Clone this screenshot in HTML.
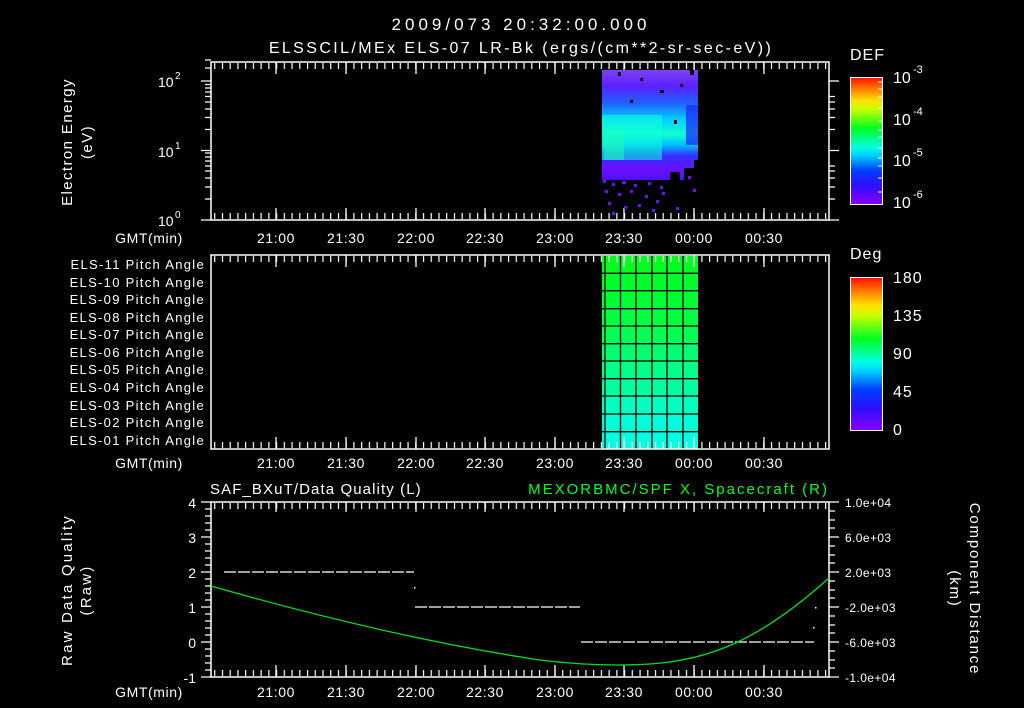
<!DOCTYPE html>
<html><head><meta charset="utf-8"><style>
html,body{margin:0;padding:0;background:#000;width:1024px;height:708px;overflow:hidden}
svg{display:block}
text{font-family:"Liberation Sans",sans-serif;fill:#fff}
.t{letter-spacing:0.6px}
</style></head><body>
<svg width="1024" height="708" viewBox="0 0 1024 708" xmlns="http://www.w3.org/2000/svg">
<defs>
<pattern id="tkT" x="276" y="0" width="7.733" height="708" patternUnits="userSpaceOnUse"><rect x="0" y="0" width="1.2" height="708" fill="#fff"/></pattern>
<linearGradient id="def" x1="0" y1="1" x2="0" y2="0">
<stop offset="0" stop-color="#8a00ff"/><stop offset="0.15" stop-color="#2a10ff"/><stop offset="0.27" stop-color="#0040ff"/><stop offset="0.38" stop-color="#00c8ff"/><stop offset="0.45" stop-color="#00ffe0"/><stop offset="0.6" stop-color="#00ff20"/><stop offset="0.75" stop-color="#c8ff00"/><stop offset="0.82" stop-color="#ffe000"/><stop offset="0.92" stop-color="#ff7000"/><stop offset="1" stop-color="#ff1000"/></linearGradient>
<linearGradient id="hm" x1="0" y1="0" x2="0" y2="1">
<stop offset="0" stop-color="#8040ff"/><stop offset="0.15" stop-color="#5a20ff"/><stop offset="0.3" stop-color="#2060ff"/><stop offset="0.45" stop-color="#00d0ff"/><stop offset="0.58" stop-color="#10ffd0"/><stop offset="0.68" stop-color="#00c0ff"/><stop offset="0.78" stop-color="#3030ff"/><stop offset="0.9" stop-color="#6a10ff"/><stop offset="1" stop-color="#5010ff"/></linearGradient>
</defs>

<text x="521" y="30" font-size="17" text-anchor="middle" letter-spacing="4">2009/073 20:32:00.000</text>
<text x="521" y="53" font-size="16" text-anchor="middle" letter-spacing="2.4">ELSSCIL/MEx ELS-07 LR-Bk  (ergs/(cm**2-sr-sec-eV))</text>

<!-- TOP PANEL -->
<rect x="211" y="62" width="618" height="158" fill="none" stroke="#fff" stroke-width="1.5"/>
<rect x="211" y="63" width="618" height="6" fill="url(#tkT)"/>
<rect x="211" y="213" width="618" height="6" fill="url(#tkT)"/>
<g stroke="#fff" stroke-width="1.3">
<path d="M276 62v12M346 62v12M416 62v12M485 62v12M555 62v12M624 62v12M694 62v12M764 62v12M276 220v-12M346 220v-12M416 220v-12M485 220v-12M555 220v-12M624 220v-12M694 220v-12M764 220v-12"/>
<path d="M201 220h10M201 150.5h10M201 81h10M205 199h6M205 187h6M205 178h6M205 171h6M205 166h6M205 161h6M205 157h6M205 153h6M205 129.5h6M205 117.5h6M205 109h6M205 102h6M205 96.5h6M205 92h6M205 88h6M205 84.5h6M205 60h6M205 68h6"/>
<path d="M839 220h-10M839 150.5h-10M839 81h-10M835 199h-6M835 187h-6M835 178h-6M835 171h-6M835 166h-6M835 129.5h-6M835 117.5h-6M835 109h-6M835 102h-6M835 96.5h-6"/>
</g>
<text x="158" y="87" font-size="14">10</text><text x="175" y="79" font-size="10">2</text>
<text x="158" y="157" font-size="14">10</text><text x="175" y="149" font-size="10">1</text>
<text x="158" y="226" font-size="14">10</text><text x="175" y="218" font-size="10">0</text>
<text transform="translate(72,142) rotate(-90)" font-size="15" text-anchor="middle" letter-spacing="1.4">Electron Energy</text>
<text transform="translate(92,142) rotate(-90)" font-size="15" text-anchor="middle" letter-spacing="1.4">(eV)</text>
<g font-size="14" text-anchor="middle" class="t">
<text x="149" y="243">GMT(min)</text>
<text x="276" y="243">21:00</text><text x="346" y="243">21:30</text><text x="416" y="243">22:00</text><text x="485" y="243">22:30</text><text x="555" y="243">23:00</text><text x="624" y="243">23:30</text><text x="694" y="243">00:00</text><text x="764" y="243">00:30</text>
</g>
<rect x="602" y="70" width="96" height="110" fill="url(#hm)"/>
<rect x="602" y="115" width="60" height="45" fill="#10ffd8" opacity="0.55"/>
<rect x="604" y="130" width="20" height="30" fill="#20ffb0" opacity="0.5"/>
<rect x="686" y="105" width="12" height="40" fill="#2020ff" opacity="0.7"/>
<g fill="#000">
<rect x="640" y="78" width="3" height="3"/><rect x="660" y="90" width="4" height="3"/><rect x="618" y="72" width="3" height="4"/><rect x="680" y="84" width="3" height="3"/><rect x="690" y="70" width="4" height="5"/><rect x="630" y="100" width="3" height="3"/><rect x="674" y="120" width="3" height="4"/><rect x="694" y="160" width="4" height="20"/><rect x="684" y="168" width="10" height="12"/><rect x="670" y="172" width="10" height="8"/>
</g>
<g fill="#6a10ff">
<rect x="603" y="180" width="3" height="3"/><rect x="612" y="183" width="3" height="3"/><rect x="622" y="181" width="4" height="3"/><rect x="634" y="184" width="3" height="3"/><rect x="648" y="182" width="3" height="3"/><rect x="660" y="186" width="3" height="3"/><rect x="605" y="190" width="3" height="3"/><rect x="618" y="193" width="3" height="3"/><rect x="630" y="190" width="3" height="3"/><rect x="645" y="195" width="3" height="3"/><rect x="662" y="192" width="3" height="3"/><rect x="693" y="189" width="3" height="3"/><rect x="608" y="202" width="3" height="3"/><rect x="624" y="206" width="3" height="3"/><rect x="638" y="204" width="3" height="3"/><rect x="652" y="209" width="3" height="3"/><rect x="612" y="212" width="3" height="3"/><rect x="676" y="207" width="3" height="3"/><rect x="656" y="200" width="3" height="3"/><rect x="688" y="176" width="3" height="3"/>
</g>
<text x="850" y="60" font-size="16" letter-spacing="1">DEF</text>
<rect x="850.5" y="77.5" width="32" height="127" fill="url(#def)" stroke="#fff" stroke-width="1"/>
<g stroke="#fff" stroke-width="1"><path d="M882 82h-4M882 89h-4M882 97h-4M882 108h-4M882 121h-4M882 130h-4M882 137h-4M882 148h-4M882 158h-4M882 166h-4M882 178h-4M882 192h-4"/></g>
<text x="893" y="83" font-size="16">10</text><text x="913" y="73" font-size="11">-3</text>
<text x="893" y="125" font-size="16">10</text><text x="913" y="115" font-size="11">-4</text>
<text x="893" y="166" font-size="16">10</text><text x="913" y="156" font-size="11">-5</text>
<text x="893" y="208" font-size="16">10</text><text x="913" y="198" font-size="11">-6</text>

<!-- MIDDLE PANEL -->
<g>
<rect x="602" y="256" width="96" height="18" fill="#00ff20"/>
<rect x="602" y="273" width="96" height="18" fill="#00ff28"/>
<rect x="602" y="290" width="96" height="19" fill="#00ff30"/>
<rect x="602" y="308" width="96" height="19" fill="#00ff40"/>
<rect x="602" y="326" width="96" height="18" fill="#00ff55"/>
<rect x="602" y="343" width="96" height="18" fill="#00ff70"/>
<rect x="602" y="361" width="96" height="18" fill="#00ff88"/>
<rect x="602" y="378" width="96" height="18" fill="#00ffa0"/>
<rect x="602" y="396" width="96" height="18" fill="#00ffc0"/>
<rect x="602" y="414" width="96" height="18" fill="#00ffd8"/>
<rect x="602" y="431" width="96" height="18" fill="#00ffe0"/>
</g>
<g stroke="#000" stroke-width="1.3"><path d="M605 255v194M620.5 255v194M636 255v194M652 255v194M667 255v194M683 255v194M602 273.3h96M602 290.7h96M602 308.7h96M602 326h96M602 343.7h96M602 361h96M602 378.7h96M602 396h96M602 414h96M602 431.7h96"/></g>
<rect x="211" y="255" width="618" height="194" fill="none" stroke="#fff" stroke-width="1.5"/>
<rect x="211" y="256" width="618" height="6" fill="url(#tkT)"/>
<rect x="211" y="442" width="618" height="6" fill="url(#tkT)"/>
<g stroke="#fff" stroke-width="1.3"><path d="M276 255v12M346 255v12M416 255v12M485 255v12M555 255v12M624 255v12M694 255v12M764 255v12M276 449v-12M346 449v-12M416 449v-12M485 449v-12M555 449v-12M624 449v-12M694 449v-12M764 449v-12"/></g>
<g font-size="13" text-anchor="end" letter-spacing="1.3">
<text x="205" y="269">ELS-11 Pitch Angle</text><text x="205" y="287">ELS-10 Pitch Angle</text><text x="205" y="304">ELS-09 Pitch Angle</text><text x="205" y="322">ELS-08 Pitch Angle</text><text x="205" y="339">ELS-07 Pitch Angle</text><text x="205" y="357">ELS-06 Pitch Angle</text><text x="205" y="374">ELS-05 Pitch Angle</text><text x="205" y="392">ELS-04 Pitch Angle</text><text x="205" y="410">ELS-03 Pitch Angle</text><text x="205" y="427">ELS-02 Pitch Angle</text><text x="205" y="445">ELS-01 Pitch Angle</text>
</g>
<g font-size="14" text-anchor="middle" class="t">
<text x="149" y="468">GMT(min)</text>
<text x="276" y="468">21:00</text><text x="346" y="468">21:30</text><text x="416" y="468">22:00</text><text x="485" y="468">22:30</text><text x="555" y="468">23:00</text><text x="624" y="468">23:30</text><text x="694" y="468">00:00</text><text x="764" y="468">00:30</text>
</g>
<text x="850" y="259" font-size="16" letter-spacing="1">Deg</text>
<rect x="850.5" y="277.5" width="32" height="153" fill="url(#def)" stroke="#fff" stroke-width="1"/>
<g font-size="16" letter-spacing="1"><text x="893" y="283">180</text><text x="893" y="321">135</text><text x="893" y="359">90</text><text x="893" y="397">45</text><text x="893" y="435">0</text></g>

<!-- BOTTOM PANEL -->
<text x="210" y="494" font-size="15" letter-spacing="1.1">SAF_BXuT/Data Quality (L)</text>
<text x="829" y="494" font-size="15" text-anchor="end" letter-spacing="2" style="fill:#00ff20">MEXORBMC/SPF X, Spacecraft (R)</text>
<rect x="211" y="502" width="618" height="175" fill="none" stroke="#fff" stroke-width="1.5"/>
<rect x="211" y="503" width="618" height="6" fill="url(#tkT)"/>
<rect x="211" y="670" width="618" height="6" fill="url(#tkT)"/>
<g stroke="#fff" stroke-width="1.3">
<path d="M276 502v10M346 502v10M416 502v10M485 502v10M555 502v10M624 502v10M694 502v10M764 502v10M276 677v-12M346 677v-12M416 677v-12M485 677v-12M555 677v-12M624 677v-12M694 677v-12M764 677v-12"/>
<path d="M201 502h10M201 537h10M201 572h10M201 607h10M201 642h10M201 677h10M205 509h6M205 516h6M205 523h6M205 530h6M205 544h6M205 551h6M205 558h6M205 565h6M205 579h6M205 586h6M205 593h6M205 600h6M205 614h6M205 621h6M205 628h6M205 635h6M205 649h6M205 656h6M205 663h6M205 670h6"/>
<path d="M829 502h10M829 537h10M829 572h10M829 607h10M829 642h10M829 677h10M829 511h6M829 520h6M829 528h6M829 546h6M829 555h6M829 563h6M829 581h6M829 590h6M829 598h6M829 616h6M829 625h6M829 633h6M829 651h6M829 660h6M829 668h6"/>
</g>
<g font-size="14" text-anchor="end"><text x="196" y="508">4</text><text x="196" y="543">3</text><text x="196" y="578">2</text><text x="196" y="613">1</text><text x="196" y="648">0</text><text x="196" y="683">-1</text></g>
<g font-size="12" letter-spacing="0.4"><text x="845" y="507">1.0e+04</text><text x="845" y="542">6.0e+03</text><text x="845" y="577">2.0e+03</text><text x="845" y="612">-2.0e+03</text><text x="845" y="647">-6.0e+03</text><text x="845" y="682">-1.0e+04</text></g>
<text transform="translate(72,590) rotate(-90)" font-size="15" text-anchor="middle" letter-spacing="2.2">Raw Data Quality</text>
<text transform="translate(91,590) rotate(-90)" font-size="15" text-anchor="middle" letter-spacing="2.2">(Raw)</text>
<text transform="translate(970,589) rotate(90)" font-size="15" text-anchor="middle" letter-spacing="1.8">Component Distance</text>
<text transform="translate(950,589) rotate(90)" font-size="15" text-anchor="middle" letter-spacing="1.8">(km)</text>
<g stroke="#fff" stroke-width="1.2" stroke-dasharray="12,2">
<path d="M224 572H414M415 607H580M581 642H814"/>
</g>
<rect x="414" y="587" width="1.5" height="1.5" fill="#fff"/><rect x="815" y="607" width="1.5" height="1.5" fill="#fff"/><rect x="813" y="627" width="1.5" height="1.5" fill="#fff"/>
<path d="M211 586 C330 620 440 645 540 660 C580 665 620 666 650 664 C710 660 760 640 829 578" fill="none" stroke="#00e020" stroke-width="1.3"/>
<g font-size="14" text-anchor="middle" class="t">
<text x="149" y="697">GMT(min)</text>
<text x="276" y="697">21:00</text><text x="346" y="697">21:30</text><text x="416" y="697">22:00</text><text x="485" y="697">22:30</text><text x="555" y="697">23:00</text><text x="624" y="697">23:30</text><text x="694" y="697">00:00</text><text x="764" y="697">00:30</text>
</g>
</svg>
</body></html>
